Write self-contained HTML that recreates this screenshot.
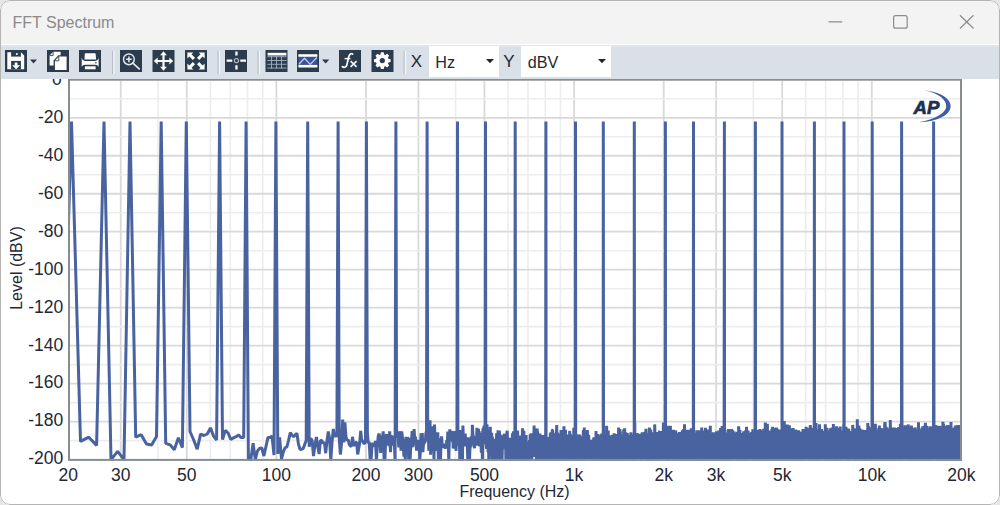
<!DOCTYPE html>
<html><head><meta charset="utf-8"><title>FFT Spectrum</title>
<style>
html,body{margin:0;padding:0;width:1000px;height:505px;overflow:hidden;background:#e6e6e6;}
*{box-sizing:border-box;}
.win{position:absolute;left:0;top:0;width:1000px;height:505px;background:#fff;border-radius:10px;overflow:hidden;}
.bord{position:absolute;left:0;top:0;width:1000px;height:505px;border:1.5px solid #b4b4b4;border-radius:10px;}
.title{position:absolute;left:0;top:0;width:1000px;height:44px;background:#f3f3f3;}
.ttext{position:absolute;left:12.5px;top:13.5px;font-family:"Liberation Sans",sans-serif;font-size:16px;color:#8a8a8a;line-height:18px;}
.tb{position:absolute;left:0;top:44.5px;width:1000px;height:34px;background:linear-gradient(#e2e7ec,#dae0e7 3px,#d9e0e7);}
.plot{position:absolute;left:0;top:0;}
.top{position:absolute;left:0;top:0;}
.gM{stroke:#d9d9d9;stroke-width:1.8;}
.gm{stroke:#ededed;stroke-width:1.6;}
.tl{font-family:"Liberation Sans",sans-serif;font-size:17.5px;fill:#1e2836;}
.tl2{font-family:"Liberation Sans",sans-serif;font-size:16px;fill:#1e2836;}
.ap{font-family:"Liberation Sans",sans-serif;font-size:18.6px;font-weight:bold;font-style:italic;fill:#1d3150;stroke:#1d3150;stroke-width:0.7px;}
.combo{position:absolute;top:46px;height:31px;background:#fff;}
.ctext{position:absolute;font-family:"Liberation Sans",sans-serif;font-size:16.2px;color:#1e2836;top:6.5px;line-height:18px;}
</style></head><body>
<div class="win">

<svg class="plot" width="1000" height="505" viewBox="0 0 1000 505">
<rect x="69" y="80" width="892" height="380" fill="#fff"/>
<line x1="120.72" y1="81" x2="120.72" y2="459" class="gM"/><line x1="157.92" y1="81" x2="157.92" y2="459" class="gm"/><line x1="186.77" y1="81" x2="186.77" y2="459" class="gM"/><line x1="210.34" y1="81" x2="210.34" y2="459" class="gm"/><line x1="230.27" y1="81" x2="230.27" y2="459" class="gm"/><line x1="247.53" y1="81" x2="247.53" y2="459" class="gm"/><line x1="262.76" y1="81" x2="262.76" y2="459" class="gm"/><line x1="276.38" y1="81" x2="276.38" y2="459" class="gM"/><line x1="366.00" y1="81" x2="366.00" y2="459" class="gM"/><line x1="418.42" y1="81" x2="418.42" y2="459" class="gM"/><line x1="455.62" y1="81" x2="455.62" y2="459" class="gm"/><line x1="484.47" y1="81" x2="484.47" y2="459" class="gM"/><line x1="508.04" y1="81" x2="508.04" y2="459" class="gm"/><line x1="527.97" y1="81" x2="527.97" y2="459" class="gm"/><line x1="545.23" y1="81" x2="545.23" y2="459" class="gm"/><line x1="560.46" y1="81" x2="560.46" y2="459" class="gm"/><line x1="574.08" y1="81" x2="574.08" y2="459" class="gM"/><line x1="663.70" y1="81" x2="663.70" y2="459" class="gM"/><line x1="716.12" y1="81" x2="716.12" y2="459" class="gM"/><line x1="753.32" y1="81" x2="753.32" y2="459" class="gm"/><line x1="782.17" y1="81" x2="782.17" y2="459" class="gM"/><line x1="805.74" y1="81" x2="805.74" y2="459" class="gm"/><line x1="825.67" y1="81" x2="825.67" y2="459" class="gm"/><line x1="842.93" y1="81" x2="842.93" y2="459" class="gm"/><line x1="858.16" y1="81" x2="858.16" y2="459" class="gm"/><line x1="871.78" y1="81" x2="871.78" y2="459" class="gM"/><line x1="70" y1="98.79" x2="960" y2="98.79" class="gm"/><line x1="70" y1="117.78" x2="960" y2="117.78" class="gM"/><line x1="70" y1="136.77" x2="960" y2="136.77" class="gm"/><line x1="70" y1="155.76" x2="960" y2="155.76" class="gM"/><line x1="70" y1="174.75" x2="960" y2="174.75" class="gm"/><line x1="70" y1="193.74" x2="960" y2="193.74" class="gM"/><line x1="70" y1="212.73" x2="960" y2="212.73" class="gm"/><line x1="70" y1="231.72" x2="960" y2="231.72" class="gM"/><line x1="70" y1="250.71" x2="960" y2="250.71" class="gm"/><line x1="70" y1="269.70" x2="960" y2="269.70" class="gM"/><line x1="70" y1="288.69" x2="960" y2="288.69" class="gm"/><line x1="70" y1="307.68" x2="960" y2="307.68" class="gM"/><line x1="70" y1="326.67" x2="960" y2="326.67" class="gm"/><line x1="70" y1="345.66" x2="960" y2="345.66" class="gM"/><line x1="70" y1="364.65" x2="960" y2="364.65" class="gm"/><line x1="70" y1="383.64" x2="960" y2="383.64" class="gM"/><line x1="70" y1="402.63" x2="960" y2="402.63" class="gm"/><line x1="70" y1="421.62" x2="960" y2="421.62" class="gM"/><line x1="70" y1="440.61" x2="960" y2="440.61" class="gm"/>
<defs><clipPath id="pc"><rect x="69" y="80" width="893" height="381"/></clipPath></defs>
<g clip-path="url(#pc)"><path d="M62.0,442.5 71.5,121.6 80.5,441.4 88.8,437.2 96.6,445.4 104.0,121.6 111.0,459.6 117.7,451.4 124.0,459.6 130.0,121.6 135.7,437.2 141.2,434.7 146.5,444.0 151.6,445.0 156.5,436.4 161.2,121.6 165.7,443.3 170.1,444.8 174.3,449.7 178.4,437.8 182.4,447.6 186.3,121.6 190.0,431.5 193.7,440.0 197.2,449.2 200.6,434.2 204.0,435.5 207.3,434.0 210.5,427.9 213.6,436.1 216.6,440.0 219.6,121.6 222.5,439.5 225.3,430.4 228.1,433.0 230.8,439.5 233.5,437.8 236.1,436.6 238.7,435.1 241.2,437.6 243.7,437.6 246.1,121.6 248.4,459.6 250.8,459.6 253.1,443.1 255.3,459.6 257.5,450.9 259.7,448.2 261.8,448.0 263.9,456.0 266.0,446.3 268.0,437.4 270.0,437.4 272.0,436.1 274.0,455.0 275.9,121.6 277.8,453.9 279.6,437.4 281.5,458.8 283.3,452.0 285.1,447.6 286.8,447.1 288.5,440.6 290.3,432.6 291.9,434.9 293.6,436.8 295.3,434.9 296.9,433.2 298.5,444.4 300.1,449.5 301.6,449.2 303.2,448.6 304.7,444.4 306.2,440.6 307.7,121.6 309.2,446.8 310.7,438.4 312.1,440.4 313.5,456.1 315.0,445.0 316.4,437.0 317.7,445.7 319.1,454.0 320.5,440.3 321.8,440.7 323.1,443.4 324.4,442.3 325.7,453.2 327.0,440.7 328.3,431.4 329.6,438.6 330.8,460.5 332.0,442.5 333.3,428.9 334.5,437.0 335.7,434.2 336.9,437.0 338.1,121.6 339.2,438.4 340.4,454.5 341.5,443.8 342.7,419.6 343.8,442.4 344.9,422.3 346.0,436.7 347.1,440.7 348.2,439.6 349.3,444.8 350.4,445.9 351.4,446.3 352.5,436.8 353.6,445.1 354.6,445.2 355.6,442.4 356.6,442.1 357.7,454.4 358.7,448.4 359.7,443.0 360.7,430.8 361.6,439.7 362.6,441.1 363.6,443.2 364.5,443.7 365.5,441.4 366.4,121.6 367.4,433.4 368.3,443.3 369.2,441.8 370.2,460.5 371.1,460.5 372.0,444.3 372.9,443.3 373.8,446.7 374.7,445.2 375.5,440.9 376.4,460.5 377.3,447.2 378.2,436.5 379.0,433.7 379.9,437.0 380.7,452.8 381.6,438.4 382.4,439.7 383.2,431.3 384.1,460.5 384.9,460.5 385.7,438.9 386.5,434.0 387.3,444.9 388.1,434.0 388.9,446.1 389.7,431.4 390.5,452.3 391.3,435.2 392.0,444.6 392.8,435.9 393.6,445.4 394.3,441.8 395.1,460.5 395.9,121.6 396.6,436.0 397.4,436.9 398.1,434.7 398.8,447.3 399.6,431.4 400.3,434.7 401.0,450.8 401.7,431.4 402.5,437.9 403.2,441.4 403.9,456.6 404.6,442.6 405.3,460.5 406.0,436.9 406.7,443.6 407.4,437.5 408.0,438.7 408.7,459.1 409.4,437.9 410.1,460.5 410.7,448.1 411.4,445.5 412.1,431.1 412.7,447.0 413.4,439.5 414.1,429.0 414.7,439.9 415.4,436.6 416.0,443.6 416.6,450.7 417.3,439.9 417.9,446.1 418.5,441.1 419.2,441.4 419.8,460.5 420.4,450.9 421.0,433.2 421.7,439.8 422.3,433.1 422.9,452.2 423.5,443.5 424.1,443.8 424.7,441.5 425.3,442.2 425.9,433.0 426.5,431.2 427.1,121.6 427.7,435.4 428.3,433.5 428.8,450.8 429.4,442.7 430.0,420.4 430.6,454.8 431.2,440.3 431.7,441.8 432.3,442.5 432.9,426.3 433.4,432.5 434.0,460.5 434.5,424.6 435.1,440.5 435.7,443.4 436.2,437.8 436.8,451.0 437.3,438.7 437.8,432.4 438.4,460.5 438.9,438.7 439.5,439.9 440.0,444.2 440.5,460.5 441.1,441.3 441.6,436.4 442.1,444.0 442.6,445.3 443.2,447.7 443.7,443.6 444.2,446.3 444.7,444.7 445.2,448.7 445.7,445.5 446.3,446.2 446.8,440.0 447.3,445.7 447.8,431.6 448.3,443.4 448.8,460.5 449.3,440.5 449.8,429.4 450.3,439.8 450.8,441.3 451.3,436.9 451.7,431.2 452.2,432.9 452.7,431.2 453.2,448.5 453.7,445.9 454.2,445.3 454.6,439.5 455.1,431.2 455.6,441.0 456.1,450.9 456.5,430.9 457.0,439.1 457.5,121.6 457.9,442.8 458.4,440.4 458.9,445.6 459.3,434.7 459.8,460.5 460.2,433.2 460.7,430.1 461.1,447.3 461.6,439.0 462.1,460.5 462.5,460.5 462.9,425.5 463.4,438.9 463.8,440.2 464.3,435.2 464.7,446.5 465.2,433.6 465.6,440.6 466.0,438.8 466.5,442.6 466.9,438.7 467.3,445.1 467.8,460.5 468.2,437.4 468.6,460.5 469.1,447.1 469.5,460.5 469.9,449.4 470.3,446.3 470.8,446.8 471.2,438.3 471.6,436.6 472.0,443.9 472.4,424.7 472.8,433.6 473.3,436.5 473.7,442.7 474.1,445.8 474.5,448.2 474.9,438.5 475.3,444.7 475.7,436.3 476.1,437.8 476.5,445.6 476.9,427.8 477.3,440.2 477.7,433.5 478.1,445.3 478.5,428.7 478.9,445.6 479.3,431.4 479.7,446.4 480.1,437.2 480.5,433.2 480.9,434.9 481.3,452.7 481.7,440.2 482.0,437.4 482.4,460.5 482.8,430.7 483.2,428.2 483.6,435.4 484.0,425.5 484.3,441.9 484.7,426.9 485.1,444.3 485.5,121.6 485.8,442.7 486.2,444.4 486.6,448.9 487.0,424.2 487.3,434.1 487.7,440.6 488.1,452.3 488.4,437.0 488.8,460.5 489.2,451.3 489.5,436.7 489.9,445.0 490.3,426.7 490.6,450.1 491.0,441.7 491.4,441.0 491.7,432.8 492.1,460.5 492.4,436.9 492.8,460.5 493.1,446.4 493.5,449.0 493.8,442.6 494.2,445.9 494.5,460.5 494.9,457.1 495.2,438.7 495.6,444.6 495.9,447.6 496.3,453.9 496.6,433.2 497.0,436.8 497.3,460.5 497.7,443.5 498.0,431.2 498.3,430.8 498.7,455.0 499.0,448.4 499.4,430.4 499.7,449.3 500.0,434.1 500.4,460.5 500.7,443.4 501.0,460.5 501.4,435.2 501.7,443.7 502.0,460.5 502.4,446.6 502.7,440.1 503.0,443.8 503.3,444.0 503.7,448.5 504.0,437.3 504.3,433.7 504.6,442.1 505.0,438.2 505.3,439.4 505.6,443.4 505.9,460.5 506.3,460.5 506.6,436.7 506.9,432.8 507.2,430.8 507.5,439.6 507.8,444.9 508.2,445.3 508.5,440.2 508.8,439.5 509.1,460.5 509.4,444.5 509.7,442.7 510.0,437.9 510.4,442.0 510.7,447.5 511.0,442.0 511.3,438.4 511.6,460.5 511.9,460.5 512.2,440.3 512.5,433.2 512.8,434.8 513.1,444.6 513.4,431.2 513.7,434.6 514.0,443.1 514.3,431.5 514.6,460.5 514.9,434.3 515.2,121.6 515.5,441.4 515.8,448.7 516.1,460.5 516.4,431.8 516.7,460.5 517.0,460.5 517.3,453.6 517.6,430.5 517.9,443.6 518.2,446.4 518.5,438.8 518.8,436.6 519.0,442.8 519.3,443.8 519.6,460.5 519.9,460.5 520.2,443.6 520.5,445.6 520.8,435.5 521.1,439.8 521.3,460.5 521.6,437.1 521.9,460.5 522.2,442.0 522.5,428.3 522.8,432.5 523.0,443.7 523.3,460.5 523.6,460.5 523.9,430.8 524.2,455.9 524.4,460.5 524.7,446.3 525.0,447.7 525.3,460.5 525.5,460.5 525.8,453.2 526.1,434.9 526.4,460.5 526.6,447.8 526.9,447.7 527.2,450.7 527.5,444.0 527.7,442.4 528.0,460.5 528.3,441.8 528.5,460.5 528.8,460.5 529.1,460.5 529.4,441.0 529.6,440.5 529.9,450.5 530.2,434.4 530.4,435.6 530.7,447.0 530.9,442.2 531.2,433.4 531.5,441.8 531.7,460.5 532.0,436.5 532.3,438.4 532.5,449.0 532.8,448.5 533.0,452.2 533.3,457.2 533.6,444.8 533.8,439.6 534.1,425.6 534.3,455.3 534.6,440.6 534.9,448.2 535.1,435.6 535.4,439.0 535.6,444.7 535.9,438.0 536.1,438.4 536.4,460.5 536.6,460.5 536.9,441.3 537.1,428.4 537.4,443.9 537.6,432.0 537.9,434.6 538.1,460.5 538.4,460.5 538.6,434.6 538.9,438.2 539.1,445.0 539.4,451.4 539.6,460.5 539.9,433.4 540.1,446.5 540.4,444.8 540.6,446.3 540.9,437.5 541.1,440.0 541.4,441.8 541.6,445.2 541.8,460.5 542.1,460.5 542.3,460.5 542.6,460.5 542.8,434.9 543.1,444.1 543.3,449.1 543.5,436.9 543.8,443.1 544.0,437.3 544.3,460.5 544.5,460.5 544.7,444.5 545.0,449.5 545.2,439.4 545.4,444.9 545.7,431.4 545.9,121.6 546.1,439.0 546.4,460.5 546.6,444.6 546.8,460.5 547.1,460.5 547.3,444.0 547.5,451.4 547.8,441.3 548.0,441.9 548.2,460.5 548.5,460.5 548.7,446.9 548.9,437.0 549.2,460.5 549.4,460.5 549.6,440.6 549.9,437.1 550.1,450.4 550.3,433.4 550.5,460.5 550.8,432.3 551.0,434.5 551.2,460.5 551.4,439.9 551.7,460.5 551.9,447.2 552.1,460.5 552.3,430.1 552.6,430.0 552.8,434.0 553.0,433.5 553.2,460.5 553.5,460.5 553.7,442.7 553.9,460.5 554.1,443.5 554.3,460.5 554.6,460.5 554.8,434.2 555.0,460.5 555.2,460.5 555.4,448.8 555.7,460.5 555.9,432.9 556.1,460.5 556.3,433.0 556.5,431.8 556.7,425.1 557.0,460.5 557.2,460.5 557.4,432.6 557.6,460.5 557.8,449.7 558.0,436.2 558.3,438.0 558.5,441.7 558.7,460.5 558.9,433.6 559.1,445.2 559.3,434.0 559.5,460.5 559.7,460.5 560.0,438.9 560.2,460.5 560.4,460.5 560.6,460.5 560.8,460.5 561.0,429.9 561.2,443.1 561.4,460.5 561.6,438.4 561.8,460.5 562.1,445.3 562.3,460.5 562.5,460.5 562.7,447.0 562.9,433.8 563.1,445.5 563.3,437.2 563.5,460.5 563.7,460.5 563.9,426.3 564.1,443.8 564.3,460.5 564.5,439.3 564.7,437.9 564.9,446.0 565.1,460.5 565.3,440.5 565.5,429.7 565.7,446.4 565.9,446.6 566.1,460.5 566.3,437.5 566.5,460.5 566.7,434.6 566.9,438.3 567.1,460.5 567.3,460.5 567.5,460.5 567.7,460.5 567.9,460.5 568.1,460.5 568.3,439.8 568.5,439.4 568.7,460.5 568.9,460.5 569.1,436.4 569.3,437.5 569.5,441.9 569.7,430.9 569.9,460.5 570.1,460.5 570.3,433.8 570.5,436.6 570.7,444.8 570.9,460.5 571.1,435.3 571.3,443.5 571.5,445.3 571.7,445.4 571.9,444.7 572.0,460.5 572.2,443.9 572.4,439.7 572.6,444.9 572.8,436.1 573.0,440.5 573.2,441.5 573.4,460.5 573.6,460.5 573.8,427.7 574.0,460.5 574.1,444.2 574.3,441.0 574.5,460.5 574.7,435.9 574.9,460.5 575.1,446.4 575.3,460.5 575.5,121.6 575.7,460.5 575.8,433.6 576.0,440.8 576.2,438.2 576.4,460.5 576.6,438.8 576.8,460.5 577.0,444.4 577.1,460.5 577.3,446.1 577.5,450.0 577.7,460.5 577.9,460.5 578.1,460.5 578.2,440.6 578.4,460.5 578.6,453.3 578.8,434.4 579.0,437.9 579.2,446.0 579.3,460.5 579.5,460.5 579.7,434.7 579.9,460.5 580.1,450.0 580.2,460.5 580.4,439.8 580.6,460.5 580.8,445.0 581.0,441.0 581.1,460.5 581.3,439.8 581.5,439.5 581.7,460.5 581.9,460.5 582.0,436.6 582.2,460.5 582.4,446.0 582.6,436.3 582.8,460.5 582.9,447.4 583.1,441.2 583.3,431.6 583.5,430.1 583.6,460.5 583.8,460.5 584.0,437.6 584.2,460.5 584.3,427.4 584.5,439.9 584.7,460.5 584.9,444.0 585.0,445.1 585.2,439.0 585.4,439.8 585.6,443.3 585.7,444.8 585.9,442.6 586.1,460.5 586.2,437.2 586.4,447.3 586.6,460.5 586.8,435.6 586.9,460.5 587.1,437.4 587.3,460.5 587.4,430.0 587.6,439.1 587.8,434.6 588.0,460.5 588.1,440.0 588.3,460.5 588.5,438.3 588.6,435.1 588.8,438.7 589.0,445.5 589.1,448.8 589.3,460.5 589.5,447.2 589.6,460.5 589.8,451.9 590.0,460.5 590.2,460.5 590.3,439.8 590.5,460.5 590.7,444.4 590.8,460.5 591.0,460.5 591.2,460.5 591.3,460.5 591.5,441.1 591.6,441.1 591.8,441.4 592.0,441.6 592.1,447.3 592.3,460.5 592.5,442.3 592.6,445.8 592.8,460.5 593.0,440.0 593.1,460.5 593.3,448.6 593.5,460.5 593.6,442.7 593.8,437.2 593.9,460.5 594.1,460.5 594.3,441.8 594.4,460.5 594.6,444.2 594.8,449.2 594.9,441.1 595.1,442.4 595.2,460.5 595.4,460.5 595.6,442.2 595.7,440.5 595.9,460.5 596.0,431.1 596.2,436.6 596.4,437.1 596.5,443.2 596.7,441.4 596.8,460.5 597.0,453.9 597.1,449.1 597.3,460.5 597.5,460.5 597.6,439.6 597.8,445.3 597.9,434.1 598.1,436.0 598.3,449.8 598.4,441.1 598.6,443.6 598.7,449.8 598.9,440.0 599.0,460.5 599.2,439.6 599.3,442.0 599.5,436.1 599.8,435.4 600.0,460.5 600.1,460.5 600.3,460.5 600.4,436.7 600.6,443.2 600.7,460.5 600.9,460.5 601.1,460.5 601.2,460.5 601.4,440.8 601.5,436.4 601.7,433.7 602.0,442.3 602.1,437.1 602.3,445.5 602.4,460.5 602.6,441.3 602.7,435.9 602.9,460.5 603.0,440.7 603.2,460.5 603.3,121.6 603.5,439.4 603.6,436.6 603.8,460.5 603.9,437.0 604.1,460.5 604.2,436.1 604.4,437.8 604.5,436.5 605.0,450.5 605.1,460.5 605.3,433.9 605.4,442.9 605.6,460.5 605.7,460.5 605.9,437.5 606.0,448.7 606.2,460.5 606.5,442.4 606.6,425.7 606.8,447.5 606.9,445.6 607.1,442.9 607.2,445.3 607.5,434.1 607.6,460.5 607.8,435.5 607.9,432.7 608.1,443.8 608.2,430.5 608.4,460.5 608.5,460.5 608.8,438.4 609.0,443.7 609.1,449.9 609.2,440.3 609.4,460.5 609.5,440.8 609.7,460.5 610.0,460.5 610.1,446.0 610.2,460.5 610.4,435.2 610.5,460.5 610.7,436.9 611.0,440.5 611.1,460.5 611.2,442.2 611.4,449.3 611.5,447.1 611.7,460.5 612.0,436.8 612.1,440.6 612.2,440.4 612.4,438.5 612.5,434.8 612.9,442.0 613.1,446.0 613.2,435.2 613.5,460.5 613.6,460.5 613.8,445.5 613.9,447.0 614.1,460.5 614.2,433.3 614.5,460.5 614.6,437.3 614.8,440.1 614.9,444.7 615.0,460.5 615.3,440.1 615.4,460.5 615.6,434.0 615.9,460.5 616.0,446.3 616.1,434.7 616.3,435.3 616.4,434.3 616.5,460.5 616.8,438.0 616.9,460.5 617.1,443.4 617.4,460.5 617.5,439.3 617.6,442.9 617.8,460.5 617.9,448.0 618.0,436.9 618.4,448.3 618.6,427.6 618.8,460.5 619.0,443.7 619.1,460.5 619.2,460.5 619.4,460.5 619.5,460.5 619.9,429.0 620.0,444.3 620.4,431.5 620.6,460.5 620.7,449.2 621.0,460.5 621.1,434.6 621.5,460.5 621.6,449.2 621.7,460.5 621.9,460.5 622.0,436.6 622.3,460.5 622.4,460.5 622.5,437.5 622.9,460.5 623.1,441.8 623.2,460.5 623.3,435.7 623.4,460.5 623.6,452.6 623.7,429.5 624.0,444.3 624.1,460.5 624.2,435.8 624.5,460.5 624.6,428.3 624.7,444.5 625.0,433.7 625.1,447.2 625.2,432.0 625.5,440.8 625.6,460.5 626.0,437.1 626.1,460.5 626.3,460.5 626.4,445.1 626.5,460.5 626.6,432.7 626.9,460.5 627.0,436.8 627.1,440.0 627.3,433.0 627.4,439.5 627.5,434.6 627.8,442.1 627.9,440.6 628.0,460.5 628.1,442.8 628.4,443.4 628.5,460.5 628.8,435.8 628.9,450.2 629.0,460.5 629.4,451.5 629.5,444.1 629.7,460.5 630.0,442.3 630.1,448.2 630.2,434.9 630.5,460.5 630.6,435.5 630.7,439.2 630.9,432.3 631.0,435.6 631.1,439.6 631.3,449.2 631.5,439.2 631.6,438.0 631.7,460.5 631.9,460.5 632.1,438.1 632.2,460.5 632.4,437.4 632.5,460.5 632.9,434.4 633.0,437.1 633.2,434.9 633.4,449.8 633.5,446.7 633.7,436.2 633.9,460.5 634.0,445.1 634.1,454.3 634.2,460.5 634.3,121.6 634.5,432.3 634.6,460.5 634.8,422.4 634.9,460.5 635.1,460.5 635.3,447.9 635.4,460.5 635.5,434.8 635.6,460.5 636.0,443.7 636.1,451.0 636.3,460.5 636.5,442.2 636.6,442.9 636.7,438.6 636.9,443.9 637.0,433.0 637.2,460.5 637.4,438.5 637.5,443.7 637.7,441.3 638.0,454.6 638.1,436.8 638.3,460.5 638.4,447.6 638.6,446.4 638.9,436.0 639.0,439.7 639.2,446.0 639.5,433.7 639.6,445.4 639.7,437.5 639.8,446.6 639.9,444.0 640.0,460.5 640.2,438.1 640.5,460.5 640.6,446.6 640.7,443.8 640.9,460.5 641.1,439.3 641.4,460.5 641.5,460.5 642.0,437.1 642.1,448.0 642.2,432.2 642.4,460.5 642.5,444.2 642.6,460.5 642.9,437.9 643.0,460.5 643.1,449.8 643.2,460.5 643.3,437.2 643.4,460.5 643.5,444.4 643.8,460.5 644.0,433.6 644.1,442.3 644.3,437.6 644.4,460.5 644.5,440.9 644.6,460.5 644.8,431.8 644.9,439.4 645.1,448.1 645.3,438.6 645.5,442.2 645.6,435.9 645.8,460.5 645.9,428.8 646.0,440.7 646.1,460.5 646.5,436.2 646.6,460.5 646.7,446.6 646.9,460.5 647.0,460.5 647.4,433.2 647.5,442.0 648.0,460.5 648.1,447.1 648.3,460.5 648.4,460.5 648.5,442.2 648.7,439.4 648.8,460.5 648.9,460.5 649.0,441.0 649.4,427.5 649.5,431.8 649.6,445.3 649.8,438.9 649.9,460.5 650.0,460.5 650.1,460.5 650.4,445.6 650.5,445.9 650.6,460.5 650.7,429.4 650.9,448.1 651.0,436.1 651.1,460.5 651.3,433.3 651.5,460.5 651.6,460.5 651.8,437.8 652.0,444.2 652.1,460.5 652.3,435.0 652.5,441.1 652.6,460.5 652.7,443.6 652.9,447.7 653.0,452.3 653.2,432.2 653.4,448.9 653.5,437.5 653.6,460.5 653.9,434.8 654.0,446.2 654.1,442.2 654.3,460.5 654.4,455.3 654.5,460.5 654.7,424.4 655.0,436.6 655.1,437.1 655.2,441.7 655.3,436.3 655.5,438.5 655.6,447.6 655.8,460.5 656.0,437.3 656.1,460.5 656.3,440.8 656.5,460.5 656.6,460.5 656.9,434.5 657.0,446.8 657.1,436.8 657.2,436.1 657.3,460.5 657.5,447.5 657.6,460.5 657.8,432.1 658.0,460.5 658.1,434.7 658.4,460.5 658.4,455.2 658.5,437.8 658.7,460.5 658.8,433.6 658.9,449.6 659.0,434.9 659.2,433.4 659.3,451.0 659.4,443.1 659.5,431.3 659.6,431.2 659.7,443.0 659.9,438.4 660.0,460.5 660.3,445.9 660.4,460.5 660.5,449.2 660.7,430.9 660.8,453.1 661.0,450.7 661.1,435.4 661.2,460.5 661.5,446.8 661.6,447.1 661.7,447.6 661.9,438.6 662.0,440.1 662.0,438.7 662.4,460.5 662.5,443.1 662.6,433.1 662.8,460.5 662.9,438.9 663.0,460.5 663.4,422.4 663.5,434.8 663.6,448.0 663.7,460.5 664.0,432.3 664.0,435.8 664.2,443.1 664.4,442.9 664.5,436.6 665.0,460.5 665.1,449.1 665.2,460.5 665.4,121.6 665.5,440.7 665.5,460.5 665.7,435.8 665.9,436.5 666.0,443.2 666.2,460.5 666.4,438.2 666.5,446.7 666.6,445.1 666.7,460.5 666.8,440.8 666.9,460.5 667.0,433.6 667.4,460.5 667.5,429.8 667.6,438.5 667.8,445.0 668.0,443.9 668.0,433.1 668.1,460.5 668.3,425.8 668.4,460.5 668.5,460.5 668.7,442.6 669.0,460.5 669.0,437.7 669.1,460.5 669.4,460.5 669.5,442.9 669.7,433.0 669.8,460.5 670.0,441.9 670.0,460.5 670.4,425.8 670.5,435.3 670.6,438.6 670.7,451.1 670.9,441.3 671.0,449.1 671.4,438.5 671.5,460.5 671.6,438.5 671.7,460.5 671.9,434.1 672.0,430.0 672.1,460.5 672.5,450.2 672.5,451.6 672.7,439.0 673.0,460.5 673.1,442.9 673.2,460.5 673.4,429.8 673.5,460.5 673.6,436.2 674.0,460.5 674.0,441.1 674.4,438.0 674.5,460.5 674.6,441.5 674.6,460.5 675.0,431.3 675.1,434.9 675.3,460.5 675.4,443.0 675.5,447.1 675.6,430.4 675.9,436.1 676.0,460.5 676.3,433.3 676.5,460.5 676.5,460.5 676.8,436.6 677.0,460.5 677.1,440.6 677.1,433.2 677.3,460.5 677.5,460.5 677.6,460.5 678.0,434.7 678.1,449.2 678.3,439.2 678.4,441.8 678.5,450.3 678.7,460.5 678.9,441.1 679.0,460.5 679.3,432.0 679.4,452.0 679.5,460.5 679.6,438.8 679.9,448.9 680.0,436.7 680.1,436.2 680.4,460.5 680.4,440.1 680.5,449.1 680.8,439.9 680.9,460.5 681.0,441.9 681.1,435.4 681.3,460.5 681.4,460.5 681.5,460.5 681.8,437.0 681.9,445.8 682.0,450.8 682.1,460.5 682.3,430.3 682.5,431.4 682.6,432.8 682.8,460.5 683.0,441.9 683.1,439.1 683.2,460.5 683.2,438.0 683.5,440.4 683.6,460.5 683.7,429.0 684.0,460.5 684.0,451.6 684.1,460.5 684.3,440.1 684.4,440.8 684.5,424.2 684.9,460.5 684.9,460.5 685.0,445.2 685.1,460.5 685.4,439.3 685.5,460.5 685.6,460.5 686.0,430.9 686.1,460.5 686.2,440.3 686.4,460.5 686.5,435.9 686.7,460.5 686.9,429.8 687.0,460.5 687.3,437.8 687.5,446.0 687.6,443.2 687.6,460.5 687.9,430.8 688.0,442.0 688.2,460.5 688.4,440.5 688.5,446.4 688.6,460.5 688.9,437.1 689.0,458.1 689.0,435.5 689.1,460.5 689.4,432.4 689.5,441.0 689.6,460.5 689.9,429.7 690.0,443.9 690.1,436.4 690.4,460.5 690.5,460.5 690.6,432.0 691.0,460.5 691.1,460.5 691.3,428.3 691.4,442.2 691.5,445.7 691.6,460.5 692.0,443.4 692.0,441.2 692.1,460.5 692.4,437.1 692.5,460.5 692.6,450.6 692.7,430.8 692.7,460.5 693.0,460.5 693.0,444.6 693.3,460.5 693.5,121.6 693.6,460.5 693.8,437.8 693.9,445.6 694.0,443.2 694.2,433.6 694.4,460.5 694.5,438.3 694.5,443.5 694.6,449.5 694.8,432.8 695.0,443.1 695.1,433.4 695.1,454.6 695.5,439.4 695.6,460.5 695.8,434.8 695.9,460.5 696.0,434.7 696.1,433.4 696.2,460.5 696.5,460.5 696.5,460.5 696.8,430.3 697.0,450.8 697.0,449.4 697.1,437.6 697.2,460.5 697.5,442.8 697.6,437.2 697.7,460.5 697.9,431.2 698.0,441.3 698.1,460.5 698.3,438.2 698.5,440.8 698.6,440.5 698.6,460.5 698.7,430.2 698.9,444.2 699.0,432.7 699.1,460.5 699.4,460.5 699.5,441.7 699.6,451.0 699.9,449.1 700.0,437.5 700.2,460.5 700.3,431.1 700.4,445.9 700.5,460.5 700.6,438.3 700.9,440.2 701.0,441.7 701.1,460.5 701.3,434.1 701.4,443.1 701.5,447.3 701.6,460.5 701.7,427.5 702.0,434.9 702.1,460.5 702.2,436.4 702.5,460.5 702.6,430.5 702.7,460.5 703.0,460.5 703.0,460.5 703.3,432.1 703.5,460.5 703.5,443.7 703.7,460.5 704.0,432.3 704.0,441.0 704.2,460.5 704.3,439.3 704.4,460.5 704.5,451.6 704.6,437.9 704.6,460.5 705.0,460.5 705.1,443.2 705.2,435.7 705.4,460.5 705.5,451.5 705.5,427.8 705.9,460.5 705.9,451.6 706.0,437.8 706.1,431.1 706.2,460.5 706.5,445.7 706.6,460.5 706.8,433.6 707.0,460.5 707.0,460.5 707.2,438.8 707.4,460.5 707.5,436.0 707.6,435.2 707.6,460.5 708.0,435.9 708.0,460.5 708.2,429.6 708.4,460.5 708.5,460.5 708.7,437.1 709.0,439.0 709.1,445.4 709.1,453.8 709.3,433.5 709.5,436.7 709.5,460.5 709.6,433.9 710.0,444.5 710.0,438.6 710.2,460.5 710.3,425.7 710.4,441.4 710.5,460.5 710.8,440.3 711.0,449.4 711.0,442.3 711.2,460.5 711.5,434.3 711.6,460.5 711.9,433.2 712.0,460.5 712.0,440.0 712.1,460.5 712.5,460.5 712.5,445.0 712.7,460.5 713.0,434.6 713.1,433.9 713.2,460.5 713.4,432.3 713.4,451.4 713.5,460.5 714.0,433.5 714.0,436.7 714.2,460.5 714.5,441.4 714.5,442.8 714.6,460.5 714.7,434.6 715.0,442.3 715.0,460.5 715.4,434.4 715.5,460.5 715.6,460.5 715.8,440.3 716.0,460.5 716.1,460.5 716.4,460.5 716.5,432.3 716.6,431.5 716.6,460.5 716.9,460.5 717.0,460.5 717.3,437.0 717.4,460.5 717.5,444.1 717.6,460.5 717.8,435.1 717.9,435.3 718.0,440.8 718.1,460.5 718.2,437.7 718.5,445.4 718.6,460.5 718.7,430.4 719.0,447.3 719.1,457.1 719.4,436.1 719.5,460.5 719.5,460.5 719.9,434.6 720.0,442.6 720.0,441.6 720.1,449.9 720.5,428.0 720.5,453.1 720.6,460.5 720.8,441.1 721.0,443.5 721.0,440.5 721.1,460.5 721.4,460.5 721.5,442.8 721.6,460.5 722.0,439.2 722.0,445.8 722.1,425.9 722.2,460.5 722.5,427.1 722.5,444.4 722.6,460.5 722.8,431.2 722.9,439.1 723.0,434.1 723.1,460.5 723.5,433.8 723.5,441.1 723.7,460.5 723.8,430.3 724.0,460.5 724.0,440.1 724.1,460.5 724.4,121.6 724.5,460.5 724.6,437.9 724.6,430.9 724.7,460.5 725.0,450.2 725.0,429.7 725.2,460.5 725.5,442.1 725.6,432.6 725.6,460.5 726.0,460.5 726.0,442.8 726.3,434.0 726.3,460.5 726.5,449.0 726.5,442.7 726.8,460.5 727.0,434.9 727.0,443.3 727.1,440.1 727.3,460.5 727.5,440.5 727.5,460.5 727.8,438.5 728.0,460.5 728.1,453.5 728.1,460.5 728.3,439.3 728.5,460.5 728.5,429.1 728.6,460.5 729.0,447.3 729.0,437.9 729.1,460.5 729.5,460.5 729.5,438.5 729.6,460.5 729.8,438.5 730.0,460.5 730.1,447.6 730.3,460.5 730.4,435.1 730.4,460.5 730.5,446.2 730.6,460.5 730.7,440.1 731.0,440.8 731.0,460.5 731.2,435.8 731.5,460.5 731.5,440.4 731.6,429.0 731.8,460.5 732.0,442.5 732.0,436.6 732.1,460.5 732.5,439.1 732.5,437.6 732.7,430.3 732.7,460.5 733.0,439.5 733.0,450.1 733.1,460.5 733.5,432.0 733.5,460.5 734.0,431.4 734.0,444.0 734.1,435.2 734.2,460.5 734.5,451.1 734.5,460.5 734.9,437.8 735.0,460.5 735.1,433.3 735.5,460.5 735.5,460.5 735.9,433.0 736.0,448.6 736.0,460.5 736.4,438.3 736.5,438.8 736.5,448.8 736.6,460.5 737.0,432.7 737.0,440.9 737.3,445.6 737.3,431.8 737.5,445.6 737.5,440.9 737.6,445.8 737.9,433.6 738.0,439.8 738.0,460.5 738.2,441.1 738.4,460.5 738.5,460.5 738.6,426.3 739.0,431.5 739.0,446.9 739.1,430.4 739.3,460.5 739.5,439.9 739.5,450.3 739.6,460.5 739.9,429.9 740.0,440.4 740.0,435.6 740.1,460.5 740.4,447.4 740.5,440.2 740.6,460.5 740.8,436.0 741.0,436.7 741.0,460.5 741.5,432.9 741.5,439.0 741.6,438.3 741.8,460.5 742.0,460.5 742.0,439.6 742.2,460.5 742.5,460.5 742.5,460.5 743.0,434.5 743.0,460.5 743.1,437.5 743.5,460.5 743.6,450.4 743.7,431.3 743.9,460.5 744.0,438.0 744.0,444.3 744.1,460.5 744.1,435.0 744.5,460.5 744.5,440.2 744.6,460.5 744.9,434.1 745.0,460.5 745.0,435.7 745.1,460.5 745.5,460.5 745.5,431.7 745.7,430.4 745.9,460.5 746.0,442.5 746.0,460.5 746.3,435.6 746.5,442.6 746.5,426.8 746.7,460.5 747.0,439.3 747.0,460.5 747.2,437.4 747.5,460.5 747.5,431.9 747.6,460.5 748.0,439.1 748.0,440.2 748.1,430.6 748.1,460.5 748.5,449.0 748.5,436.1 748.6,433.6 748.7,460.5 749.0,450.8 749.0,441.5 749.1,460.5 749.3,438.8 749.5,460.5 749.5,460.5 749.7,434.1 750.0,446.4 750.0,436.4 750.1,460.5 750.2,433.1 750.5,442.8 750.5,433.4 750.6,460.5 751.0,441.3 751.0,460.5 751.4,435.7 751.5,446.6 751.5,445.1 751.6,431.9 751.8,460.5 752.0,443.2 752.0,433.9 752.1,460.5 752.2,433.8 752.5,460.5 752.5,440.1 752.7,460.5 752.8,429.3 753.0,433.1 753.0,437.3 753.1,460.5 753.5,440.9 753.5,436.5 753.7,460.5 753.9,431.1 754.0,431.3 754.0,436.2 754.1,435.7 754.3,460.5 754.5,447.3 754.5,460.5 754.9,431.3 755.0,442.0 755.0,444.8 755.1,460.5 755.4,121.6 755.5,437.5 755.5,449.2 755.6,433.9 755.7,450.4 756.0,442.5 756.0,438.1 756.1,460.5 756.3,429.7 756.5,440.7 756.5,442.6 756.7,460.5 756.7,440.9 757.0,444.1 757.0,445.0 757.2,460.5 757.5,431.6 757.5,460.5 757.8,437.3 758.0,441.8 758.0,442.5 758.1,460.5 758.2,433.1 758.5,435.4 758.5,437.8 758.6,434.5 758.8,460.5 759.0,442.2 759.0,430.0 759.3,460.5 759.5,439.3 759.5,460.5 759.9,429.1 760.0,441.9 760.0,460.5 760.3,436.7 760.5,442.3 760.5,444.9 760.6,430.1 760.7,460.5 761.0,432.7 761.0,460.5 761.1,432.9 761.5,460.5 761.5,447.0 761.6,460.5 761.8,436.3 762.0,439.1 762.0,460.5 762.3,433.0 762.5,448.8 762.5,444.5 762.6,460.5 762.8,434.1 763.0,447.8 763.0,460.5 763.4,436.3 763.5,445.9 763.5,439.9 763.7,428.7 763.8,452.9 764.0,441.0 764.0,449.9 764.3,460.5 764.4,430.7 764.5,431.7 764.5,446.0 764.7,460.5 764.9,433.4 765.0,435.2 765.0,460.5 765.3,422.6 765.5,460.5 765.5,444.9 765.6,460.5 765.8,435.4 766.0,442.0 766.0,444.9 766.1,460.5 766.1,431.4 766.5,460.5 766.5,445.0 766.6,460.5 766.8,436.3 767.0,446.3 767.0,450.2 767.1,460.5 767.4,423.7 767.5,460.5 767.5,460.5 767.7,431.7 768.0,447.8 768.0,449.4 768.1,432.7 768.2,460.5 768.5,438.0 768.5,431.0 768.7,460.5 768.8,430.6 769.0,443.1 769.0,460.5 769.2,433.1 769.5,460.5 769.5,453.1 769.7,460.5 769.8,436.2 770.0,460.5 770.0,443.9 770.1,460.5 770.5,434.1 770.5,445.8 770.6,432.2 770.6,460.5 771.0,460.5 771.0,439.3 771.0,460.5 771.4,430.7 771.5,443.6 771.5,434.0 771.6,460.5 771.9,429.1 772.0,442.6 772.0,442.4 772.2,460.5 772.4,427.5 772.5,437.9 772.5,460.5 772.7,426.8 773.0,446.6 773.0,441.5 773.1,453.1 773.4,430.0 773.5,448.7 773.5,434.9 773.6,428.1 773.8,460.5 774.0,444.4 774.0,440.0 774.1,460.5 774.3,433.1 774.5,442.2 774.5,445.4 774.5,460.5 774.9,431.5 775.0,460.5 775.0,440.3 775.1,460.5 775.1,433.1 775.5,439.6 775.5,435.2 775.5,460.5 775.7,434.9 776.0,436.1 776.0,460.5 776.2,432.7 776.5,442.7 776.5,427.6 776.5,460.5 777.0,444.0 777.0,444.8 777.1,460.5 777.2,428.7 777.5,440.7 777.5,460.5 777.9,435.0 778.0,446.2 778.0,449.5 778.2,460.5 778.3,430.4 778.5,431.9 778.5,443.7 778.5,460.5 778.9,432.8 779.0,439.7 779.0,460.5 779.5,438.3 779.5,439.8 779.6,429.5 779.8,460.5 780.0,438.6 780.0,437.7 780.1,460.5 780.2,434.9 780.5,442.1 780.5,444.8 780.6,460.5 780.8,433.7 781.0,460.5 781.0,437.3 781.1,460.5 781.4,434.8 781.5,439.1 781.5,460.5 781.7,430.7 782.0,460.5 782.0,121.6 782.1,460.5 782.5,430.3 782.5,441.3 782.6,460.5 782.6,437.0 783.0,441.1 783.0,432.4 783.2,460.5 783.5,449.7 783.5,435.4 783.7,460.5 784.0,460.5 784.0,437.3 784.1,460.5 784.2,421.0 784.5,434.0 784.5,460.5 784.9,435.9 785.0,436.7 785.0,439.0 785.1,434.0 785.2,460.5 785.5,434.2 785.5,436.6 785.6,460.5 785.9,425.0 786.0,460.5 786.0,460.5 786.1,424.6 786.5,442.4 786.5,436.5 786.6,460.5 786.9,429.1 787.0,453.1 787.0,460.5 787.3,424.5 787.5,460.5 787.5,460.5 787.7,429.0 788.0,438.2 788.0,445.3 788.1,460.5 788.2,430.3 788.5,431.3 788.5,448.4 788.5,460.5 789.0,436.4 789.0,437.4 789.1,460.5 789.4,425.3 789.5,437.5 789.5,445.3 789.6,460.5 789.8,434.7 790.0,446.3 790.0,439.7 790.1,431.6 790.3,460.5 790.5,444.8 790.5,441.6 790.7,460.5 790.7,433.3 791.0,439.4 791.0,430.7 791.0,460.5 791.5,443.3 791.5,460.5 791.9,428.3 792.0,460.5 792.0,435.6 792.1,460.5 792.2,429.8 792.5,460.5 792.5,447.7 792.6,460.5 793.0,436.2 793.0,460.5 793.1,428.1 793.5,460.5 793.5,460.5 793.6,432.6 794.0,460.5 794.0,460.5 794.3,435.1 794.5,437.7 794.5,435.4 794.6,433.4 794.7,460.5 795.0,442.3 795.0,460.5 795.1,430.9 795.5,444.9 795.5,440.2 795.7,460.5 795.7,429.5 796.0,441.8 796.0,460.5 796.4,436.6 796.5,438.5 796.5,438.2 796.6,460.5 796.8,433.9 797.0,443.0 797.0,460.5 797.4,430.9 797.5,460.5 797.5,460.5 797.8,432.8 798.0,460.5 798.0,433.3 798.1,460.5 798.5,443.6 798.5,460.5 798.5,430.3 799.0,440.7 799.0,441.6 799.0,460.5 799.5,437.5 799.5,439.9 799.6,460.5 799.7,431.5 800.0,460.5 800.0,439.4 800.1,460.5 800.5,435.2 800.5,460.5 800.5,432.9 800.6,432.0 800.7,460.5 801.0,460.5 801.0,431.8 801.1,460.5 801.5,439.3 801.5,460.5 801.9,432.0 802.0,443.9 802.0,460.5 802.2,433.0 802.5,434.3 802.5,440.8 802.5,460.5 802.8,433.6 803.0,439.5 803.0,428.9 803.1,460.5 803.5,444.0 803.5,460.5 803.7,431.6 804.0,435.2 804.0,452.0 804.1,460.5 804.3,432.1 804.5,437.9 804.5,443.1 804.5,460.5 804.8,429.5 805.0,440.0 805.0,448.7 805.1,431.6 805.2,460.5 805.5,446.4 805.5,432.1 805.7,460.5 806.0,443.8 806.0,439.7 806.1,426.8 806.2,460.5 806.5,444.9 806.5,460.5 806.8,432.7 807.0,460.5 807.0,460.5 807.5,428.3 807.5,444.1 807.6,460.5 807.7,428.2 808.0,460.5 808.0,434.2 808.1,460.5 808.4,431.7 808.5,436.8 808.5,460.5 808.9,432.1 809.0,444.7 809.0,438.4 809.2,460.5 809.4,427.8 809.5,441.7 809.5,460.5 809.7,432.1 810.0,460.5 810.0,438.7 810.1,460.5 810.3,425.1 810.5,460.5 810.5,438.9 810.5,434.2 810.6,460.5 811.0,453.1 811.0,442.1 811.1,432.5 811.2,460.5 811.5,437.0 811.5,442.9 811.5,431.2 811.6,460.5 812.0,440.3 812.0,447.0 812.1,460.5 812.4,434.0 812.5,438.5 812.5,460.5 812.8,438.4 813.0,460.5 813.0,460.5 813.1,427.8 813.5,460.5 813.5,443.9 813.6,460.5 813.9,430.8 814.0,438.7 814.0,441.3 814.2,460.5 814.4,121.6 814.5,460.5 814.5,456.4 814.6,460.5 814.6,436.3 815.0,460.5 815.0,460.5 815.4,431.0 815.5,443.1 815.5,443.9 815.6,460.5 816.0,423.0 816.0,460.5 816.4,429.2 816.5,442.8 816.5,442.8 816.6,460.5 816.7,433.7 817.0,460.5 817.0,443.2 817.1,434.3 817.2,460.5 817.5,460.5 817.5,443.3 817.6,460.5 818.0,431.5 818.0,460.5 818.0,439.5 818.1,430.9 818.2,460.5 818.5,460.5 818.5,439.3 818.6,432.5 818.7,460.5 819.0,460.5 819.0,434.3 819.1,460.5 819.4,424.3 819.5,460.5 819.5,441.6 819.6,425.2 819.6,460.5 820.0,445.2 820.0,442.4 820.0,460.5 820.1,431.0 820.5,435.9 820.5,460.5 820.6,429.9 821.0,445.9 821.0,445.4 821.1,460.5 821.2,434.8 821.5,442.1 821.5,428.9 821.6,460.5 822.0,446.1 822.0,460.5 822.2,434.5 822.5,444.6 822.5,460.5 822.8,433.5 823.0,460.5 823.0,440.0 823.1,460.5 823.5,432.5 823.5,445.3 823.7,460.5 823.9,434.9 824.0,440.2 824.0,460.5 824.4,430.8 824.5,437.2 824.5,460.5 825.0,432.0 825.0,435.8 825.1,460.5 825.3,424.3 825.5,460.5 825.5,446.5 825.5,460.5 825.8,430.1 826.0,460.5 826.0,435.7 826.1,460.5 826.1,434.8 826.5,443.8 826.5,460.5 826.7,427.9 827.0,444.0 827.0,435.9 827.1,460.5 827.5,432.0 827.5,442.6 827.5,437.8 827.8,430.8 828.0,460.5 828.0,445.2 828.0,460.5 828.3,433.9 828.5,437.0 828.5,456.9 828.6,460.5 828.7,434.4 829.0,460.5 829.0,442.6 829.0,460.5 829.2,432.6 829.5,440.8 829.5,460.5 830.0,430.5 830.0,445.6 830.1,428.2 830.1,460.5 830.5,428.5 830.5,437.1 830.6,460.5 830.7,434.1 831.0,449.3 831.0,460.5 831.4,430.0 831.5,439.5 831.5,432.7 831.5,460.5 831.6,429.7 832.0,431.6 832.0,460.5 832.1,427.5 832.5,430.6 832.5,460.5 832.6,434.6 833.0,460.5 833.0,439.4 833.1,460.5 833.4,423.9 833.5,444.8 833.5,444.0 833.6,460.5 833.7,428.7 834.0,440.2 834.0,460.5 834.1,427.8 834.5,460.5 834.5,449.2 834.8,430.4 834.8,460.5 835.0,460.5 835.0,460.5 835.3,434.7 835.5,460.5 835.5,427.7 835.6,460.5 836.0,439.3 836.0,460.5 836.3,427.4 836.5,460.5 836.5,442.7 836.6,426.3 836.7,460.5 837.0,460.5 837.0,460.5 837.3,433.3 837.5,441.7 837.5,434.1 837.6,460.5 837.9,428.4 838.0,460.5 838.0,460.5 838.4,432.9 838.5,440.8 838.5,436.5 838.5,460.5 838.9,430.7 839.0,445.5 839.0,460.5 839.3,428.1 839.5,436.5 839.5,460.5 839.5,431.5 840.0,460.5 840.0,439.3 840.1,460.5 840.2,426.5 840.5,460.5 840.5,434.3 840.5,460.5 841.0,460.5 841.0,442.1 841.2,460.5 841.4,434.7 841.5,437.7 841.5,460.5 841.7,430.2 842.0,445.4 842.0,444.2 842.1,460.5 842.4,431.5 842.5,445.4 842.5,436.9 842.6,460.5 842.8,431.1 843.0,443.1 843.0,431.5 843.0,460.5 843.5,438.7 843.5,460.5 843.7,424.2 844.0,460.5 844.0,121.6 844.2,460.5 844.5,443.7 844.5,437.1 844.6,460.5 844.8,429.1 845.0,448.8 845.0,438.1 845.0,460.5 845.2,434.6 845.5,460.5 845.5,432.0 845.6,460.5 846.0,441.8 846.0,445.8 846.0,426.8 846.1,460.5 846.5,442.7 846.5,460.5 847.0,435.6 847.0,460.5 847.0,439.3 847.0,460.5 847.3,430.8 847.5,444.9 847.5,439.0 847.6,460.5 847.9,429.9 848.0,439.0 848.0,441.2 848.0,428.4 848.1,460.5 848.5,460.5 848.5,444.0 848.6,460.5 848.7,428.7 849.0,460.5 849.0,436.8 849.1,460.5 849.1,430.7 849.5,440.5 849.5,437.3 849.6,460.5 849.8,431.8 850.0,460.5 850.0,439.1 850.1,460.5 850.4,431.3 850.5,444.6 850.5,434.1 850.7,460.5 850.9,432.2 851.0,436.7 851.0,440.1 851.0,460.5 851.3,434.7 851.5,439.6 851.5,439.8 851.5,460.5 851.8,436.0 852.0,448.2 852.0,432.0 852.1,460.5 852.4,431.9 852.5,435.6 852.5,448.4 852.5,460.5 852.7,424.9 853.0,437.6 853.0,436.0 853.1,460.5 853.4,428.8 853.5,438.2 853.5,431.7 853.6,460.5 854.0,434.2 854.0,436.9 854.0,460.5 854.1,428.4 854.5,443.3 854.5,435.6 854.5,434.0 854.7,460.5 855.0,460.5 855.0,445.7 855.1,460.5 855.3,433.6 855.5,460.5 855.5,442.6 855.6,460.5 855.8,435.9 856.0,442.9 856.0,437.4 856.1,460.5 856.4,432.9 856.5,437.2 856.5,460.5 856.8,428.9 857.0,437.9 857.0,457.1 857.1,460.5 857.3,419.3 857.5,460.5 857.5,460.5 857.7,430.4 858.0,460.5 858.0,436.2 858.0,460.5 858.1,432.9 858.5,444.7 858.5,460.5 858.9,425.6 859.0,442.0 859.0,460.5 859.4,432.4 859.5,447.8 859.5,441.6 859.5,460.5 859.9,428.3 860.0,460.5 860.0,431.6 860.1,431.0 860.1,460.5 860.5,452.1 860.5,442.5 860.5,460.5 860.9,431.3 861.0,456.8 861.0,437.0 861.0,460.5 861.5,433.3 861.5,439.7 861.5,460.5 861.6,429.6 862.0,443.2 862.0,434.0 862.1,460.5 862.3,432.1 862.5,443.8 862.5,437.1 862.6,460.5 862.8,429.8 863.0,440.0 863.0,460.5 863.2,432.3 863.5,447.1 863.5,446.2 863.6,460.5 863.9,432.9 864.0,460.5 864.0,452.1 864.0,460.5 864.5,433.7 864.5,460.5 864.6,430.0 865.0,434.6 865.0,446.7 865.1,460.5 865.5,432.0 865.5,448.0 865.5,431.6 865.6,460.5 866.0,460.5 866.0,439.6 866.2,460.5 866.2,432.5 866.5,460.5 866.5,437.6 866.6,460.5 866.8,433.8 867.0,460.5 867.0,437.6 867.0,460.5 867.5,429.5 867.5,441.8 867.5,452.8 867.7,460.5 867.8,423.0 868.0,433.7 868.0,442.4 868.2,460.5 868.5,426.2 868.5,460.5 868.5,443.3 868.5,429.1 868.5,460.5 869.0,434.8 869.0,445.1 869.0,460.5 869.1,431.8 869.5,451.7 869.5,460.5 870.0,429.1 870.0,429.2 870.1,460.5 870.5,441.7 870.5,447.4 870.6,460.5 871.0,434.6 871.0,460.5 871.0,449.9 871.0,460.5 871.4,428.7 871.5,442.7 871.5,427.6 871.5,460.5 872.0,460.5 872.0,449.4 872.0,460.5 872.2,121.6 872.5,460.5 872.5,439.8 872.6,460.5 872.8,431.7 873.0,447.6 873.0,435.7 873.2,460.5 873.3,431.3 873.5,442.5 873.5,460.5 873.7,434.7 874.0,460.5 874.0,460.5 874.1,430.4 874.5,443.9 874.5,460.5 874.6,432.2 875.0,434.9 875.0,432.7 875.0,460.5 875.4,423.7 875.5,460.5 875.5,444.3 875.6,460.5 875.8,430.2 876.0,444.9 876.0,430.2 876.0,460.5 876.5,445.0 876.5,460.5 876.7,431.7 877.0,448.8 877.0,438.6 877.0,460.5 877.3,435.9 877.5,440.9 877.5,437.5 877.7,460.5 877.9,431.0 878.0,432.7 878.0,460.5 878.1,434.2 878.5,439.5 878.5,441.4 878.5,460.5 878.7,428.0 879.0,460.5 879.0,460.5 879.4,425.4 879.5,433.4 879.5,434.0 879.5,460.5 879.8,428.1 880.0,436.1 880.0,428.7 880.0,460.5 880.5,442.1 880.5,460.5 880.7,428.1 881.0,460.5 881.0,460.5 881.1,433.0 881.5,460.5 881.5,449.6 881.6,460.5 881.7,429.1 882.0,460.5 882.0,428.3 882.1,460.5 882.5,450.2 882.5,437.5 882.7,460.5 882.7,428.7 883.0,444.5 883.0,448.3 883.1,460.5 883.4,429.5 883.5,446.7 883.5,438.4 883.5,460.5 883.9,433.1 884.0,435.8 884.0,460.5 884.3,430.4 884.5,444.3 884.5,442.5 884.5,460.5 884.7,422.7 885.0,460.5 885.0,460.5 885.1,422.1 885.5,433.3 885.5,443.1 885.6,460.5 885.8,432.1 886.0,440.5 886.0,432.3 886.0,460.5 886.1,426.8 886.5,443.7 886.5,438.5 886.5,460.5 886.8,427.7 887.0,460.5 887.0,439.5 887.0,460.5 887.2,429.0 887.5,439.9 887.5,438.1 887.5,460.5 887.9,431.9 888.0,452.4 888.0,450.3 888.0,460.5 888.4,430.2 888.5,443.7 888.5,438.3 888.6,460.5 888.8,432.5 889.0,460.5 889.0,449.4 889.0,460.5 889.4,431.3 889.5,440.4 889.5,460.5 890.0,427.4 890.0,460.5 890.0,460.5 890.3,419.9 890.5,435.0 890.5,448.1 890.6,460.5 890.9,427.1 891.0,460.5 891.0,438.2 891.1,460.5 891.3,430.5 891.5,447.7 891.5,432.6 891.6,460.5 892.0,428.0 892.0,439.5 892.0,438.2 892.1,460.5 892.2,429.7 892.5,443.7 892.5,453.2 892.5,460.5 892.9,434.1 893.0,438.4 893.0,460.5 893.1,430.1 893.5,441.1 893.5,438.0 893.5,460.5 893.8,432.2 894.0,435.3 894.0,460.5 894.3,427.6 894.5,460.5 894.5,460.5 894.6,429.1 895.0,437.3 895.0,460.5 895.4,428.3 895.5,443.1 895.5,439.9 895.6,460.5 895.9,430.4 896.0,439.7 896.0,460.5 896.4,429.0 896.5,460.5 896.5,439.7 896.5,460.5 896.7,428.1 897.0,434.7 897.0,460.5 897.3,429.2 897.5,436.0 897.5,441.7 897.5,460.5 897.8,428.8 898.0,436.4 898.0,438.1 898.1,460.5 898.2,431.6 898.5,460.5 898.5,437.4 898.6,426.9 898.6,460.5 899.0,458.1 899.0,460.5 899.0,433.5 899.5,435.4 899.5,460.5 899.9,429.2 900.0,438.3 900.0,448.3 900.0,460.5 900.4,423.8 900.5,453.6 900.5,460.3 900.6,460.5 900.6,426.9 901.0,460.5 901.0,460.5 901.2,429.9 901.5,443.1 901.5,441.4 901.5,460.5 901.6,121.6 902.0,443.5 902.0,441.4 902.0,460.5 902.5,427.0 902.5,460.5 902.5,441.9 902.5,460.5 902.9,432.8 903.0,439.2 903.0,460.5 903.3,427.5 903.5,460.5 903.5,443.0 903.5,460.5 903.7,428.7 904.0,443.4 904.0,429.7 904.0,460.5 904.5,433.5 904.5,436.3 904.5,460.5 904.7,429.5 905.0,443.7 905.0,442.8 905.1,425.3 905.1,460.5 905.5,435.4 905.5,434.2 905.5,460.5 905.6,429.3 906.0,435.7 906.0,447.1 906.0,460.5 906.4,426.5 906.5,460.5 906.5,460.5 906.9,431.8 907.0,446.9 907.0,441.8 907.0,426.2 907.1,460.5 907.5,434.7 907.5,430.8 907.5,460.5 907.8,426.0 908.0,460.5 908.0,460.5 908.2,424.4 908.5,440.2 908.5,460.5 908.8,428.5 909.0,438.4 909.0,445.5 909.0,460.5 909.1,428.6 909.5,460.5 909.5,460.5 909.8,427.5 910.0,445.1 910.0,431.4 910.0,460.5 910.5,460.5 910.5,460.5 910.8,429.4 911.0,448.8 911.0,433.0 911.0,460.5 911.4,425.6 911.5,441.4 911.5,442.8 911.6,460.5 911.7,433.0 912.0,460.5 912.0,433.9 912.0,460.5 912.0,431.7 912.5,441.4 912.5,460.5 912.7,430.1 913.0,444.2 913.0,441.0 913.2,460.5 913.5,431.5 913.5,443.1 913.5,460.5 913.6,432.4 914.0,460.5 914.0,444.7 914.0,460.5 914.2,427.8 914.5,437.0 914.5,442.3 914.5,460.5 914.7,431.6 915.0,460.5 915.0,439.4 915.0,460.5 915.1,427.4 915.5,437.4 915.5,447.4 915.6,460.5 915.9,431.2 916.0,460.5 916.0,444.4 916.0,460.5 916.4,431.2 916.5,434.9 916.5,460.5 916.8,431.8 917.0,443.8 917.0,439.0 917.1,429.3 917.1,460.5 917.5,438.1 917.5,444.1 917.5,460.5 917.6,429.8 918.0,460.5 918.0,460.5 918.2,435.0 918.5,440.0 918.5,460.5 918.5,422.3 919.0,460.5 919.0,460.5 919.2,430.9 919.5,445.1 919.5,460.5 919.9,432.4 920.0,437.2 920.0,444.4 920.1,460.5 920.2,431.9 920.5,434.9 920.5,437.8 920.5,460.5 920.7,429.2 921.0,460.5 921.0,447.2 921.0,460.5 921.1,435.1 921.5,446.3 921.5,434.0 921.5,460.5 922.0,427.7 922.0,434.7 922.0,439.1 922.1,428.9 922.1,460.5 922.5,445.4 922.5,443.7 922.5,460.5 922.8,426.3 923.0,460.5 923.0,442.0 923.1,428.0 923.1,460.5 923.5,444.8 923.5,438.8 923.5,460.5 923.6,427.8 924.0,436.1 924.0,460.5 924.1,425.8 924.5,433.4 924.5,440.2 924.6,460.5 924.8,433.0 925.0,437.0 925.0,438.2 925.0,460.5 925.4,422.7 925.5,439.7 925.5,460.5 925.6,434.9 926.0,442.3 926.0,440.3 926.0,460.5 926.3,434.4 926.5,460.5 926.5,431.3 926.5,460.5 926.6,425.9 927.0,438.3 927.0,445.9 927.0,460.5 927.1,431.1 927.5,460.5 927.5,432.6 927.5,460.5 927.9,429.7 928.0,460.5 928.0,442.4 928.0,460.5 928.4,430.5 928.5,441.1 928.5,442.5 928.6,428.3 928.6,460.5 929.0,460.5 929.0,440.7 929.1,460.5 929.1,430.3 929.5,460.5 929.5,434.8 929.6,460.5 929.9,426.2 930.0,460.5 930.0,440.1 930.0,460.5 930.3,433.1 930.5,437.8 930.5,439.1 930.5,460.5 930.7,426.6 931.0,438.3 931.0,439.6 931.1,460.5 931.2,429.6 931.5,460.5 931.5,439.0 931.6,460.5 931.7,430.3 932.0,437.8 932.0,427.3 932.0,460.5 932.5,435.7 932.5,441.1 932.6,460.5 932.9,429.0 933.0,438.6 933.0,445.5 933.0,460.5 933.3,431.9 933.5,460.5 933.5,460.5 933.6,121.6 934.0,442.8 934.0,452.7 934.0,460.5 934.2,427.3 934.5,453.4 934.5,460.5 934.8,428.4 935.0,440.3 935.0,460.5 935.1,433.0 935.5,434.2 935.5,440.8 935.6,460.5 935.7,425.1 936.0,460.5 936.0,460.5 936.3,428.1 936.5,460.5 936.5,438.6 936.5,460.5 936.7,428.5 937.0,460.5 937.0,460.5 937.3,425.9 937.5,447.0 937.5,441.7 937.5,460.5 937.8,432.0 938.0,439.1 938.0,438.8 938.0,460.5 938.3,428.0 938.5,435.8 938.5,442.1 938.5,460.5 938.8,430.6 939.0,460.5 939.0,425.7 939.0,460.5 939.5,435.4 939.5,443.1 939.5,460.5 939.9,428.8 940.0,442.6 940.0,436.3 940.0,460.5 940.1,432.0 940.5,460.5 940.5,460.5 941.0,426.5 941.0,439.2 941.0,438.6 941.0,460.5 941.5,426.0 941.5,460.5 941.5,438.3 941.5,460.5 941.6,432.9 942.0,442.9 942.0,441.7 942.0,460.5 942.0,427.6 942.5,439.1 942.5,460.5 942.9,421.7 943.0,434.2 943.0,439.8 943.0,460.5 943.3,430.3 943.5,434.3 943.5,434.2 943.5,423.8 943.6,460.5 944.0,441.5 944.0,447.1 944.0,460.5 944.2,428.2 944.5,460.5 944.5,440.9 944.5,460.5 944.7,432.1 945.0,436.7 945.0,431.8 945.0,460.5 945.4,425.7 945.5,460.5 945.5,460.5 945.7,431.4 946.0,442.6 946.0,439.4 946.0,429.5 946.1,460.5 946.5,436.2 946.5,433.2 946.5,460.5 946.9,430.0 947.0,434.9 947.0,460.5 947.3,429.1 947.5,445.7 947.5,432.2 947.5,460.5 947.6,424.9 948.0,460.5 948.0,438.6 948.1,460.5 948.4,425.2 948.5,460.5 948.5,435.4 948.5,460.5 948.8,431.6 949.0,438.0 949.0,460.5 949.1,429.6 949.5,447.2 949.5,439.9 949.5,460.5 949.5,431.1 950.0,443.4 950.0,443.8 950.0,460.5 950.2,431.4 950.5,445.5 950.5,443.5 950.6,460.5 951.0,422.1 951.0,430.3 951.0,443.1 951.0,460.5 951.4,430.0 951.5,433.5 951.5,435.0 951.6,460.5 951.6,427.9 952.0,448.4 952.0,445.3 952.1,460.5 952.4,428.9 952.5,440.7 952.5,460.5 953.0,435.1 953.0,444.7 953.0,433.3 953.1,460.5 953.1,427.7 953.5,460.5 953.5,446.8 953.6,460.5 953.9,431.5 954.0,437.2 954.0,460.5 954.4,429.0 954.5,445.6 954.5,433.9 954.5,460.5 955.0,427.0 955.0,438.7 955.0,429.3 955.0,460.5 955.2,426.4 955.5,435.7 955.5,449.7 955.5,460.5 955.8,425.3 956.0,460.5 956.0,460.5 956.3,430.9 956.5,435.4 956.5,434.2 956.6,460.5 956.7,428.0 957.0,460.5 957.0,434.3 957.0,460.5 957.4,432.6 957.5,446.5 957.5,433.8 957.6,460.5 957.8,431.1 958.0,457.1 958.0,434.0 958.0,460.5 958.0,431.9 958.5,443.7 958.5,460.5 958.7,425.1 959.0,452.9 959.0,444.7 959.1,460.5 959.4,430.1 959.5,432.5 959.5,445.8 959.5,460.5 959.8,430.1 960.0,441.5 960.0,460.5 960.5,429.7 960.5,460.5 960.5,441.0 960.5,460.5 960.6,431.1 961.0,443.7 961.0,439.0 961.0,460.5 961.2,435.4 961.4,447.4" fill="none" stroke="#4863a0" stroke-width="3" stroke-linejoin="bevel"/></g>
<rect x="69" y="79.7" width="892" height="380.2" fill="none" stroke="#878c91" stroke-width="2"/>
<text x="68.3" y="480.6" text-anchor="middle" class="tl">20</text><text x="120.7" y="480.6" text-anchor="middle" class="tl">30</text><text x="186.8" y="480.6" text-anchor="middle" class="tl">50</text><text x="276.4" y="480.6" text-anchor="middle" class="tl">100</text><text x="366.0" y="480.6" text-anchor="middle" class="tl">200</text><text x="418.4" y="480.6" text-anchor="middle" class="tl">300</text><text x="484.5" y="480.6" text-anchor="middle" class="tl">500</text><text x="574.1" y="480.6" text-anchor="middle" class="tl">1k</text><text x="663.7" y="480.6" text-anchor="middle" class="tl">2k</text><text x="716.1" y="480.6" text-anchor="middle" class="tl">3k</text><text x="782.2" y="480.6" text-anchor="middle" class="tl">5k</text><text x="871.8" y="480.6" text-anchor="middle" class="tl">10k</text><text x="961.4" y="480.6" text-anchor="middle" class="tl">20k</text><text x="61.8" y="84.6" text-anchor="end" class="tl">0</text><text x="63.2" y="122.6" text-anchor="end" class="tl">-20</text><text x="63.2" y="160.6" text-anchor="end" class="tl">-40</text><text x="63.2" y="198.5" text-anchor="end" class="tl">-60</text><text x="63.2" y="236.5" text-anchor="end" class="tl">-80</text><text x="63.2" y="274.5" text-anchor="end" class="tl">-100</text><text x="63.2" y="312.5" text-anchor="end" class="tl">-120</text><text x="63.2" y="350.5" text-anchor="end" class="tl">-140</text><text x="63.2" y="388.4" text-anchor="end" class="tl">-160</text><text x="63.2" y="426.4" text-anchor="end" class="tl">-180</text><text x="63.2" y="464.4" text-anchor="end" class="tl">-200</text>
<text x="514.5" y="497" text-anchor="middle" class="tl2">Frequency (Hz)</text>
<text transform="translate(21.5,268) rotate(-90)" text-anchor="middle" class="tl2">Level (dBV)</text>
<!-- AP logo -->
<text x="913.6" y="114.2" class="ap">AP</text>
<path d="M924,90.2 C941,92 951.5,99 950.6,107 C949.6,115 938,121.6 919,122.2 C935,119.5 945.5,113 946.2,107 C947,100 939,93 924,90.2 Z" fill="#3f5da6"/>
</svg>
<div class="title"><div class="ttext">FFT Spectrum</div></div>
<div class="tb"></div>
<svg class="top" width="1000" height="80" viewBox="0 0 1000 80">
<path d="M828.5,21.8 H842.2" stroke="#8c8c8c" stroke-width="1.2"/>
<rect x="893.6" y="15.6" width="13.6" height="12.6" rx="2" fill="none" stroke="#8c8c8c" stroke-width="1.2"/>
<path d="M960,15.3 L973.5,28.5 M973.5,15.3 L960,28.5" stroke="#8c8c8c" stroke-width="1.2"/>
<g transform="translate(5,50)"><rect width="22" height="22" fill="#2a3c4e"/><path d="M2.3,2.3 H15.9 L19.2,5.4 V19.2 H2.3 Z" fill="#ffffff"/>
<rect x="6.1" y="1.5" width="9.8" height="5.1" fill="#2a3c4e"/><circle cx="11.8" cy="3.9" r="1" fill="#ffffff"/>
<rect x="6.1" y="10.9" width="9.8" height="8.3" fill="#2a3c4e"/>
<path d="M9.7,12.6 H12.5 V15.3 H15.1 L11.1,19.3 L7.1,15.3 H9.7 Z" fill="#ffffff"/></g><path d="M30,59.4 H37 L33.5,63.4 Z" fill="#2a3c4e"/><g transform="translate(47,50)"><rect width="22" height="22" fill="#2a3c4e"/><path d="M2.6,5.6 L6.1,1.8 H13.6 V15.4 H2.6 Z" fill="#ffffff"/>
<path d="M2.6,5.6 H6.1 V1.8" fill="none" stroke="#2a3c4e" stroke-width="0.9"/>
<path d="M6.6,10.4 L11.3,5.2 H21.2 V21.2 H6.6 Z" fill="#2a3c4e"/>
<path d="M7.9,10.8 L11.8,6.6 H19.6 V20.1 H7.9 Z" fill="#ffffff"/>
<path d="M7.9,10.8 H11.8 V6.6" fill="none" stroke="#2a3c4e" stroke-width="0.9"/></g><g transform="translate(79,50)"><rect width="22" height="22" fill="#2a3c4e"/><path d="M6.6,3.3 H15.9 Q16.6,3.3 16.7,4 L17,9.6 H5.5 L5.8,4 Q5.9,3.3 6.6,3.3 Z" fill="#ffffff"/>
<path d="M2.7,7.6 Q3.4,10.9 6,10.9 H16.2 Q19,10.9 19.6,7.6 V17 Q19,14.8 16.2,14.8 H6 Q3.4,14.8 2.7,17 Z" fill="#ffffff"/>
<circle cx="16.9" cy="12.8" r="0.8" fill="#2a3c4e"/>
<rect x="5.9" y="16.3" width="10.7" height="3" fill="#ffffff"/></g><rect x="112" y="51" width="1.3" height="23" fill="#b9bec6"/><rect x="113.3" y="51" width="1.3" height="23" fill="#f4f6f8"/><g transform="translate(120,50)"><rect width="22" height="22" fill="#2a3c4e"/><circle cx="8.9" cy="9.3" r="5.4" fill="none" stroke="#dfe4ea" stroke-width="1.5"/>
<path d="M6.0,9.3 H11.8 M8.9,6.4 V12.2" stroke="#dfe4ea" stroke-width="1.6"/>
<path d="M12.9,13.2 L19.2,18.9" stroke="#dfe4ea" stroke-width="1.8" stroke-linecap="round"/></g><g transform="translate(152.5,50)"><rect width="22" height="22" fill="#2a3c4e"/><path d="M11,1.3 L14.4,5.2 H12.1 V9.9 H16.8 V7.6 L20.7,11 L16.8,14.4 V12.1 H12.1 V16.8 H14.4 L11,20.7 L7.6,16.8 H9.9 V12.1 H5.2 V14.4 L1.3,11 L5.2,7.6 V9.9 H9.9 V5.2 H7.6 Z" fill="#ffffff"/></g><g transform="translate(185,50)"><rect width="22" height="22" fill="#2a3c4e"/><path d="M2.40,2.40 L8.40,2.40 L6.50,4.30 L10.00,7.80 L7.80,10.00 L4.30,6.50 L2.40,8.40 Z" fill="#ffffff"/><path d="M19.60,2.40 L13.60,2.40 L15.50,4.30 L12.00,7.80 L14.20,10.00 L17.70,6.50 L19.60,8.40 Z" fill="#ffffff"/><path d="M2.40,19.60 L8.40,19.60 L6.50,17.70 L10.00,14.20 L7.80,12.00 L4.30,15.50 L2.40,13.60 Z" fill="#ffffff"/><path d="M19.60,19.60 L13.60,19.60 L15.50,17.70 L12.00,14.20 L14.20,12.00 L17.70,15.50 L19.60,13.60 Z" fill="#ffffff"/></g><rect x="217.5" y="51" width="1.3" height="23" fill="#b9bec6"/><rect x="218.8" y="51" width="1.3" height="23" fill="#f4f6f8"/><g transform="translate(225,50)"><rect width="22" height="22" fill="#2a3c4e"/><path d="M11.45,1.6 V5.6 M11.45,15.3 V19.5 M1.6,10.6 H7.3 M15.3,10.6 H21" stroke="#ffffff" stroke-width="2.3" stroke-linecap="butt"/>
<circle cx="11.45" cy="10.6" r="2.1" fill="none" stroke="#b8c2d0" stroke-width="1.1"/></g><rect x="257.5" y="51" width="1.3" height="23" fill="#b9bec6"/><rect x="258.8" y="51" width="1.3" height="23" fill="#f4f6f8"/><g transform="translate(265.5,50)"><rect width="22" height="22" fill="#2a3c4e"/><rect x="2.1" y="2.8" width="18.8" height="2.7" fill="#ffffff"/><rect x="1.8" y="6.3" width="19.2" height="0.9" fill="#a4b0c0"/><rect x="1.8" y="10.0" width="19.2" height="0.9" fill="#a4b0c0"/><rect x="1.8" y="13.8" width="19.2" height="0.9" fill="#a4b0c0"/><rect x="1.8" y="17.6" width="19.2" height="0.9" fill="#a4b0c0"/><rect x="5.6" y="5.5" width="0.9" height="13" fill="#a4b0c0"/><rect x="10.6" y="5.5" width="0.9" height="13" fill="#a4b0c0"/><rect x="15.6" y="5.5" width="0.9" height="13" fill="#a4b0c0"/></g><g transform="translate(297,50)"><rect width="22" height="22" fill="#2a3c4e"/><rect x="1.4" y="6.8" width="19" height="8.1" fill="#3b529a"/>
<rect x="1.4" y="4.2" width="19" height="2.6" fill="#ffffff"/>
<rect x="1.4" y="14.9" width="19" height="2.6" fill="#ffffff"/>
<path d="M1.9,14.3 L7.5,8.2 L13.2,14.4 L19.9,7.5" fill="none" stroke="#c4cce8" stroke-width="1.3"/></g><path d="M322,59.4 H329.3 L325.65,63.4 Z" fill="#2a3c4e"/><g transform="translate(339,50)"><rect width="22" height="22" fill="#2a3c4e"/><path d="M13.6,4.2 Q12.6,3.3 11.4,3.9 Q10.2,4.6 9.6,7.2 L7.9,14.6 Q7.3,17.2 5.2,17.3 Q4.0,17.3 3.4,16.6" fill="none" stroke="#ffffff" stroke-width="1.7" stroke-linecap="round"/>
<path d="M5.6,8.6 H11.4" stroke="#ffffff" stroke-width="1.4"/>
<path d="M11.6,11.2 L17.6,16.8 M17.6,11.2 L11.6,16.8" stroke="#eef0f4" stroke-width="1.8"/></g><g transform="translate(371.5,50)"><rect width="22" height="22" fill="#2a3c4e"/><path d="M9.38,2.32 L12.22,2.32 L12.69,4.49 L13.79,4.94 L15.65,3.74 L17.66,5.75 L16.46,7.61 L16.91,8.71 L19.08,9.18 L19.08,12.02 L16.91,12.49 L16.46,13.59 L17.66,15.45 L15.65,17.46 L13.79,16.26 L12.69,16.71 L12.22,18.88 L9.38,18.88 L8.91,16.71 L7.81,16.26 L5.95,17.46 L3.94,15.45 L5.14,13.59 L4.69,12.49 L2.52,12.02 L2.52,9.18 L4.69,8.71 L5.14,7.61 L3.94,5.75 L5.95,3.74 L7.81,4.94 L8.91,4.49 Z" fill="#ffffff"/><circle cx="10.8" cy="10.6" r="2.6" fill="#2a3c4e"/></g><rect x="403.5" y="51" width="1.3" height="23" fill="#b9bec6"/><rect x="404.8" y="51" width="1.3" height="23" fill="#f4f6f8"/>
<text x="410.8" y="66.8" class="tl2" style="font-size:17px">X</text>
<text x="503.3" y="66.8" class="tl2" style="font-size:17px">Y</text>
</svg>
<div class="combo" style="left:428.8px;width:70.2px;"><div class="ctext" style="left:6.5px">Hz</div>
<svg style="position:absolute;left:57px;top:13px" width="9" height="5"><path d="M0,0 H8 L4,4.2 Z" fill="#1e2836"/></svg></div>
<div class="combo" style="left:520.8px;width:90.2px;"><div class="ctext" style="left:7px">dBV</div>
<svg style="position:absolute;left:77.5px;top:13px" width="9" height="5"><path d="M0,0 H8 L4,4.2 Z" fill="#1e2836"/></svg></div>
<div class="bord"></div>
</div>
</body></html>
